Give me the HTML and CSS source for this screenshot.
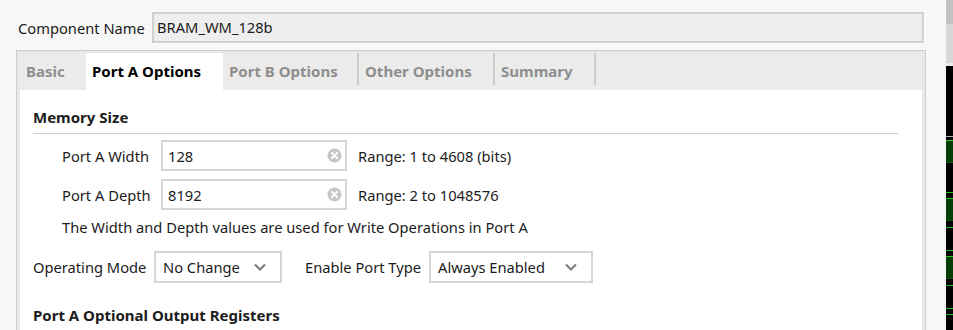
FILE: index.html
```html
<!DOCTYPE html>
<html lang="en">
<head>
    <meta charset="UTF-8">
    <title>Block Memory Generator</title>
    <link rel="stylesheet" href="styles.css">
</head>
<body>
    <div class="dialog">
        <!-- Component name -->
        <div class="name-row">
            <span class="name-label">Component Name</span>
            <div class="name-input">BRAM_WM_128b</div>
        </div>

        <!-- Tabbed options -->
        <div class="panel">
            <div class="tabs">
                <div class="tab">Basic</div>
                <div class="tab active">Port A Options</div>
                <div class="tab sep">Port B Options</div>
                <div class="tab sep">Other Options</div>
                <div class="tab sep">Summary</div>
            </div>

            <div class="content">
                <div class="group-title">Memory Size</div>

                <div class="field-row first">
                    <span class="field-label">Port A Width</span>
                    <div class="text-input">
                        <span>128</span>
                        <svg class="clear" width="15" height="15" viewBox="0 0 16 16"><circle cx="8" cy="8" r="7.5" fill="#c6c6c6"/><path d="M5.2 5.2 L10.8 10.8 M10.8 5.2 L5.2 10.8" stroke="#fff" stroke-width="2.2" stroke-linecap="round"/></svg>
                    </div>
                    <span class="range">Range: 1 to 4608 (bits)</span>
                </div>

                <div class="field-row">
                    <span class="field-label">Port A Depth</span>
                    <div class="text-input">
                        <span>8192</span>
                        <svg class="clear" width="15" height="15" viewBox="0 0 16 16"><circle cx="8" cy="8" r="7.5" fill="#c6c6c6"/><path d="M5.2 5.2 L10.8 10.8 M10.8 5.2 L5.2 10.8" stroke="#fff" stroke-width="2.2" stroke-linecap="round"/></svg>
                    </div>
                    <span class="range">Range: 2 to 1048576</span>
                </div>

                <p class="note">The Width and Depth values are used for Write Operations in Port A</p>

                <div class="select-row">
                    <span class="mode-label">Operating Mode</span>
                    <div class="select mode">
                        <span>No Change</span>
                        <svg width="12" height="8" viewBox="0 0 12 8"><path d="M1 1.5 L6 6.5 L11 1.5" fill="none" stroke="#7a7a7a" stroke-width="2"/></svg>
                    </div>
                    <span class="enable-label">Enable Port Type</span>
                    <div class="select enable">
                        <span>Always Enabled</span>
                        <svg width="12" height="8" viewBox="0 0 12 8"><path d="M1 1.5 L6 6.5 L11 1.5" fill="none" stroke="#7a7a7a" stroke-width="2"/></svg>
                    </div>
                </div>

                <div class="group-title plain">Port A Optional Output Registers</div>
            </div>
        </div>
    </div>

    <!-- window behind the dialog -->
    <div class="behind"></div>
</body>
</html>
```

FILE: styles.css
```css
body {
    margin: 0;
    height: 330px;
    overflow: hidden;
    display: flex;
    background-color: #f7f7f7;
    font-family: "Noto Sans", "Open Sans", sans-serif;
    font-size: 14.7px;
    color: #1c1c1c;
}
.dialog {
    width: 910px;
    padding: 12px 20px 0 16px;
}
.name-row {
    display: flex;
    align-items: center;
    height: 31px;
    margin: 0 2px 7px 2px;
}
.name-label {
    width: 134px;
}
.name-input {
    flex: 1;
    height: 27px;
    line-height: 27px;
    padding-left: 3px;
    background-color: #eeeeee;
    border: 2px solid #d0d0d0;
    box-shadow: 1px 1px 0 #ffffff;
}
.panel {
    height: 277px;
    border: 1px solid #cfcfcf;
    border-bottom: none;
    background-color: #e8e8e8;
    padding: 2px 3px 0 3px;
}
.tabs {
    display: flex;
    align-items: flex-start;
    height: 37px;
    background-color: #ebebeb;
}
.tab {
    box-sizing: border-box;
    height: 32px;
    padding: 6px 0 0 6px;
    line-height: 24px;
    font-size: 15px;
    font-weight: bold;
    color: #8e8e8e;
}
.tab:nth-child(1) { width: 66px; }
.tab:nth-child(2) { width: 137px; }
.tab:nth-child(3) { width: 136px; }
.tab:nth-child(4) { width: 136px; }
.tab:nth-child(5) { width: 101px; }
.tab.sep {
    border-right: 2px solid #cbcbcb;
}
.tab.active {
    height: 37px;
    background-color: #ffffff;
    color: #000000;
}
.content {
    height: 223px;
    overflow: hidden;
    background-color: #ffffff;
    padding: 17px 24px 0 13px;
}
.group-title {
    font-size: 15px;
    font-weight: bold;
    line-height: 20px;
    padding-bottom: 6px;
    border-bottom: 1px solid #cfcfcf;
}
.group-title.plain {
    border-bottom: none;
    padding-bottom: 0;
    margin-top: 22px;
}
.field-row {
    display: flex;
    align-items: center;
    padding-left: 29px;
    margin-top: 8px;
}
.field-row.first {
    margin-top: 6px;
}
.field-label {
    width: 99px;
}
.text-input {
    box-sizing: border-box;
    width: 186px;
    height: 31px;
    display: flex;
    align-items: center;
    justify-content: space-between;
    padding: 0 3px 0 5px;
    border: 2px solid #d6d6d6;
}
.range {
    margin-left: 11px;
}
.note {
    margin: 7px 0 0 29px;
    line-height: 20px;
}
.select-row {
    display: flex;
    align-items: center;
    margin-top: 14px;
}
.mode-label {
    width: 121px;
}
.enable-label {
    width: 124px;
    margin-left: 23px;
}
.select {
    box-sizing: border-box;
    height: 32px;
    display: flex;
    align-items: center;
    justify-content: space-between;
    padding: 0 14px 0 7px;
    border: 2px solid #d6d6d6;
}
.select.mode { width: 128px; }
.select.enable { width: 164px; }
.behind {
    width: 7px;
    background: linear-gradient(to bottom,
        #c2c2c2 0, #c2c2c2 24px,
        #d8d8d8 24px, #d8d8d8 63px,
        #ececec 63px, #ececec 66px,
        #000 66px, #000 136px,
        #b0b0b0 136px, #b0b0b0 137px,
        #000 137px, #000 140px,
        #1fc21f 140px, #1fc21f 141px,
        #053f05 141px, #053f05 162px,
        #0a5a0a 162px, #0a5a0a 163px,
        #000 163px, #000 192px,
        #1fc21f 192px, #1fc21f 193px,
        #000 193px, #000 198px,
        #1fc21f 198px, #1fc21f 199px,
        #053f05 199px, #053f05 220px,
        #0a5a0a 220px, #0a5a0a 221px,
        #000 221px, #000 227px,
        #1fc21f 227px, #1fc21f 228px,
        #000 228px, #000 250px,
        #1fc21f 250px, #1fc21f 251px,
        #000 251px, #000 256px,
        #1fc21f 256px, #1fc21f 257px,
        #053f05 257px, #053f05 278px,
        #0a5a0a 278px, #0a5a0a 279px,
        #000 279px, #000 285px,
        #1fc21f 285px, #1fc21f 286px,
        #000 286px, #000 308px,
        #1fc21f 308px, #1fc21f 309px,
        #000 309px, #000 314px,
        #1fc21f 314px, #1fc21f 315px,
        #000 315px);
}
```
